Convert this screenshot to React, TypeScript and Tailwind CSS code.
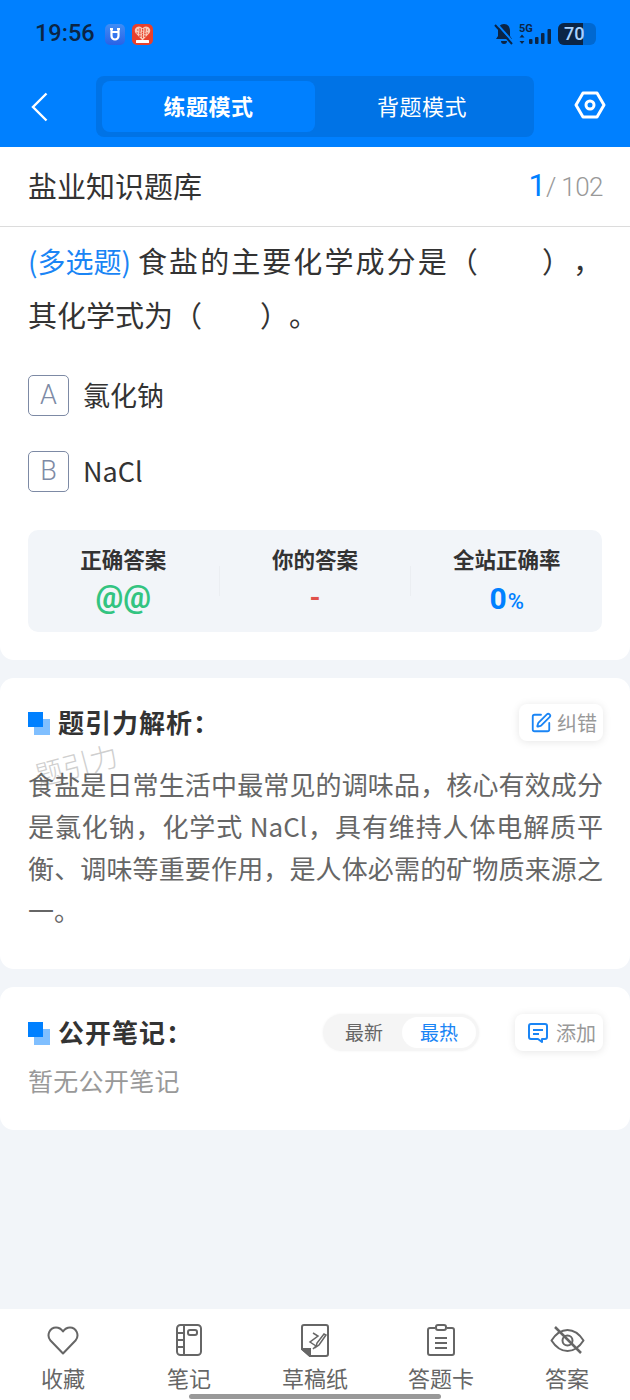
import { SquarePen } from "lucide-react"

const font = { fontFamily: '"Noto Sans CJK SC", "Noto Sans", sans-serif' }

function SectionMark() {
  return (
    <span className="relative block w-[22px] h-[23px] shrink-0">
      <span className="absolute left-[6px] top-[7px] w-4 h-4 bg-[#80bfff]" />
      <span className="absolute left-0 top-0 w-[15px] h-[15px] bg-[#0080ff]" />
    </span>
  )
}

function Option({ letter, text }: { letter: string; text: string }) {
  return (
    <div className="flex items-center gap-[14px] h-[42px]">
      <span className="w-[41px] h-[41px] rounded-[5px] border border-[#7d8aa5] flex items-center justify-center text-[27px] font-light text-[#7d8aa5] font-['Roboto']">
        {letter}
      </span>
      <span className="text-[27px] text-[#333]">{text}</span>
    </div>
  )
}

function Stat({ label, children }: { label: string; children: React.ReactNode }) {
  return (
    <div className="flex-1 flex flex-col items-center">
      <span className="text-[21.5px] leading-[30px] font-bold text-[#333]">{label}</span>
      <div className="h-[48px] flex items-center">{children}</div>
    </div>
  )
}

function TabItem({ label, children }: { label: string; children: React.ReactNode }) {
  return (
    <div className="flex-1 flex flex-col items-center">
      <div className="h-[44px] flex items-center justify-center">{children}</div>
      <span className="text-[22px] leading-[30px] text-[#666]">{label}</span>
    </div>
  )
}

export default function App() {
  return (
    <div style={font} className="w-[630px] h-[1400px] relative overflow-hidden bg-[#f2f5f9] flex flex-col">
      {/* Header */}
      <header className="h-[147px] bg-[#0080ff] shrink-0 flex flex-col">
        <div className="h-[76px] pl-[35px] pr-[34px] pt-[20px] flex items-start justify-between">
          <div className="flex items-center h-[28px]">
            <span className="text-[23.5px] font-medium text-[#0b2545] font-['Roboto']">19:56</span>
            <svg className="ml-[10px]" width="20" height="21" viewBox="0 0 20 21">
              <defs>
                <linearGradient id="appU" x1="0" y1="0" x2="0" y2="1">
                  <stop offset="0" stopColor="#3f8df5" />
                  <stop offset="1" stopColor="#2a62e6" />
                </linearGradient>
              </defs>
              <rect width="20" height="21" rx="5" fill="url(#appU)" />
              <path d="M5 5h3M12 5h3M6.500 5v7a3.500 3.500 0 0 0 7 0V5M6.500 8h7" fill="none" stroke="white" strokeWidth="2.200" />
            </svg>
            <svg className="ml-[7px]" width="21" height="21" viewBox="0 0 21 21">
              <rect width="21" height="21" rx="5" fill="#e8402c" />
              <path d="M10.500 16.500 3.500 9C1.500 5.500 4 2.500 7 2.500c1.500 0 2.700.7 3.500 2 .8-1.300 2-2 3.500-2 3 0 5.500 3 3.500 6.500Z" fill="#f8c9b8" />
              <path d="M5 6h11M4.500 9h12M7 12h7M8 4v9M10.500 5v10M13 4v9" stroke="#e8402c" strokeWidth="1" strokeDasharray="1.500 1" />
              <rect x="4" y="16" width="13" height="3" rx="0.500" fill="#fff" />
            </svg>
          </div>
          <div className="flex items-center h-[28px]">
            <svg width="20" height="22" viewBox="0 0 20 22" fill="#0b2545">
              <path d="M10 1C6 1 4 4 4 8v5l-2 3h16l-2-3V8c0-4-2-7-6-7ZM7 18h6a3 3 0 0 1-6 0Z" />
              <path d="M3 1 19 19" stroke="#0080ff" strokeWidth="2" />
              <path d="M1 2 18 21" stroke="#0b2545" strokeWidth="2" />
            </svg>
            <svg className="ml-[5px]" width="33" height="23" viewBox="0 0 33 23" fill="#0b2545">
              <text x="0" y="9" fontSize="11" fontWeight="700" fontFamily="Roboto">5G</text>
              <path d="M3 11.500l2.500 3H.5ZM3 21l2.500-3H.5Z" />
              <rect x="10" y="16" width="3.500" height="5" rx="1" />
              <rect x="16" y="14" width="3.500" height="7" rx="1" />
              <rect x="22" y="10" width="3.500" height="11" rx="1" />
              <rect x="28.500" y="6" width="3.500" height="15" rx="1" />
            </svg>
            <div className="ml-[6px] w-[38px] h-[22px] rounded-[6px] bg-[#0068d0] relative overflow-hidden">
              <div className="absolute left-0 top-0 h-full w-[25px] bg-[#0b2545]" />
              <span className="absolute left-[6px] top-0 text-[18px] leading-[22px] font-medium text-[#a9d3ff] font-['Roboto']">70</span>
            </div>
          </div>
        </div>
        <div className="flex items-start">
          <div className="w-[96px] pt-[16px] pl-[31px]">
            <svg width="17" height="30" viewBox="0 0 17 30" fill="none" stroke="white" strokeWidth="2.400">
              <path d="M15.500 1.500 2 15l13.500 13.500" />
            </svg>
          </div>
          <div className="w-[438px] h-[61px] rounded-[8px] bg-[#0073e6] py-[5px] pl-[6px] pr-[5px] flex">
            <div className="w-[213px] rounded-[8px] bg-[#0080ff] pb-[2px] flex items-center justify-center text-[22px] tracking-[0.5px] font-bold text-white">
              练题模式
            </div>
            <div className="flex-1 pb-[2px] flex items-center justify-center text-[22px] tracking-[0.5px] text-white">背题模式</div>
          </div>
          <div className="flex-1 flex justify-center pt-[13px] pl-[16px]">
            <svg width="32" height="32" viewBox="0 0 32 32" fill="none" stroke="white" strokeWidth="3">
              <path d="M9 4h14l7 12-7 12H9L2 16Z" strokeLinejoin="round" />
              <circle cx="16" cy="16" r="4" />
            </svg>
          </div>
        </div>
      </header>

      {/* Title row */}
      <div className="h-[80px] bg-white border-b border-[#dcdcdc] shrink-0 px-[27px] flex items-center justify-between">
        <span className="pl-[1px] pb-[2px] text-[29px] text-[#333]">盐业知识题库</span>
        <span className="flex items-baseline font-['Roboto'] font-light text-[#999]">
          <span className="text-[31px] font-normal text-[#0080ff]">1</span>
          <span className="text-[26px]">/</span>
          <span className="text-[26px] ml-[5px] tracking-[-0.5px]">102</span>
        </span>
      </div>

      {/* Question card */}
      <section className="h-[433px] bg-white rounded-b-[14px] px-[28px] shrink-0">
        <div className="text-[29px] leading-[53px] text-[#333] pt-[7px] [text-spacing-trim:space-all]">
          <p className="[text-align-last:justify]">
            <span className="inline-block mr-[5px] text-[28px] text-[#1a85f5]">(多选题)</span>食盐的主要化学成分是（　　），
          </p>
          <p>其化学式为（　　）。</p>
        </div>
        <div className="mt-[33px] flex flex-col gap-[34px]">
          <Option letter="A" text="氯化钠" />
          <Option letter="B" text="NaCl" />
        </div>
        <div className="mt-[38px] h-[102px] rounded-[10px] bg-[#f2f5f9] flex pt-[14px]">
          <Stat label="正确答案">
            <span className="text-[31px] font-bold text-[#33c481] font-['Roboto']">@@</span>
          </Stat>
          <div className="w-px h-[30px] mt-[22px] bg-[#ebeef2]" />
          <Stat label="你的答案">
            <span className="text-[28px] font-bold text-[#e0504a] font-['Roboto']">-</span>
          </Stat>
          <div className="w-px h-[30px] mt-[22px] bg-[#ebeef2]" />
          <Stat label="全站正确率">
            <span className="font-bold text-[#0080ff] font-['Roboto']">
              <span className="text-[30px]">0</span>
              <span className="text-[22px] font-medium ml-[1px]">%</span>
            </span>
          </Stat>
        </div>
      </section>

      {/* Analysis card */}
      <section className="mt-[18px] h-[291px] bg-white rounded-[14px] pl-[28px] pr-[27px] pt-[26px] shrink-0 relative">
        <div className="flex items-start justify-between">
          <div className="flex items-center gap-[8px] h-[38px]">
            <SectionMark />
            <h2 className="pb-[3px] text-[26px] font-bold text-[#333] tracking-[1px]">题引力解析：</h2>
          </div>
          <button className="h-[37px] w-[84px] rounded-[8px] bg-white shadow-[0_1px_8px_rgba(0,0,0,0.1)] flex items-center pl-[11px] gap-[5px] text-[20px] text-[#999]">
            <SquarePen className="w-[22px] h-[22px] text-[#1a85f5]" strokeWidth={2} />
            纠错
          </button>
        </div>
        <span className="absolute left-[34px] top-[65px] -rotate-[15deg] text-[28px] font-light text-[#cfcfcf]">题引力</span>
        <p className="relative mt-[21px] text-[26px] leading-[42px] text-[#666] text-justify">
          食盐是日常生活中最常见的调味品，核心有效成分是氯化钠，化学式 NaCl，具有维持人体电解质平衡、调味等重要作用，是人体必需的矿物质来源之一。
        </p>
      </section>

      {/* Notes card */}
      <section className="mt-[18px] h-[143px] bg-white rounded-[14px] pl-[28px] pr-[27px] pt-[27px] shrink-0">
        <div className="flex items-start justify-between">
          <div className="flex items-center gap-[8px] h-[38px]">
            <SectionMark />
            <h2 className="pb-[3px] text-[26px] font-bold text-[#333] tracking-[1px]">公开笔记：</h2>
          </div>
          <div className="flex items-start gap-[36px]">
            <div className="w-[156px] h-[37px] rounded-full bg-[#f5f5f5] p-[3px] flex items-center text-[19px] shadow-[0_0_3px_rgba(0,0,0,0.05)]">
              <span className="flex-1 text-center text-[#666]">最新</span>
              <span className="w-[74px] h-[31px] rounded-full bg-white flex items-center justify-center text-[#1a85f5]">最热</span>
            </div>
            <button className="h-[37px] w-[88px] rounded-[8px] bg-white shadow-[0_1px_8px_rgba(0,0,0,0.1)] flex items-center pl-[12px] gap-[7px] text-[20px] text-[#999]">
              <svg width="22" height="22" viewBox="0 0 22 22" fill="none" stroke="#1a85f5" strokeWidth="2">
                <path d="M4 2h14a2 2 0 0 1 2 2v11a2 2 0 0 1-2 2h-3v3l-4-3H4a2 2 0 0 1-2-2V4a2 2 0 0 1 2-2Z" strokeLinejoin="round" />
                <path d="M6 8h10M6 12h6" />
              </svg>
              添加
            </button>
          </div>
        </div>
        <p className="mt-[10px] text-[25px] leading-[36px] tracking-[0.3px] text-[#999]">暂无公开笔记</p>
      </section>

      {/* Bottom bar */}
      <nav className="absolute left-0 right-0 bottom-0 h-[91px] bg-white flex pt-[9px]">
        <TabItem label="收藏">
          <svg width="32" height="29" viewBox="0 0 32 29" fill="none" stroke="#666" strokeWidth="2">
            <path d="M16 27.500 3.500 14.500C-1 9 3 1.500 9 1.500c3 0 5.300 1.500 7 4 1.700-2.500 4-4 7-4 6 0 10 7.500 5.500 13Z" strokeLinejoin="round" />
          </svg>
        </TabItem>
        <TabItem label="笔记">
          <svg width="26" height="32" viewBox="0 0 26 32" fill="none" stroke="#666" strokeWidth="2">
            <rect x="1" y="1" width="24" height="30" rx="3.500" />
            <path d="M8 1v30M1 9h7M1 16h7M1 23h7" />
            <rect x="12" y="6" width="9" height="5" rx="2" />
          </svg>
        </TabItem>
        <TabItem label="草稿纸">
          <svg width="28" height="33" viewBox="0 0 28 33" fill="none" stroke="#666" strokeWidth="2">
            <path d="M3 1h22a2 2 0 0 1 2 2v27a2 2 0 0 1-2 2H9l-8-7V3a2 2 0 0 1 2-2Z" strokeLinejoin="round" />
            <path d="M1 25h8v7Z" fill="#666" />
            <path d="M12 9l5 3-8 6 6 4-3 3" strokeWidth="1.500" />
            <path d="M25 11l-7 10-3 2 1-4 7-9Z" strokeWidth="1.500" />
          </svg>
        </TabItem>
        <TabItem label="答题卡">
          <svg width="28" height="32" viewBox="0 0 28 32" fill="none" stroke="#666" strokeWidth="2">
            <path d="M8 4H3a2 2 0 0 0-2 2v23a2 2 0 0 0 2 2h22a2 2 0 0 0 2-2V6a2 2 0 0 0-2-2h-5" />
            <rect x="9" y="1" width="10" height="5" rx="2" />
            <path d="M8 14h12M8 19h12M8 24h12" />
          </svg>
        </TabItem>
        <TabItem label="答案">
          <svg width="35" height="28" viewBox="0 0 35 28" fill="none" stroke="#666" strokeWidth="2">
            <path d="M1.500 14.500C6 7.500 11 4 17.500 4s11.500 3.500 16 10.500C29 21.500 24 25 17.500 25S6 21.500 1.500 14.500Z" strokeLinejoin="round" />
            <circle cx="17.500" cy="14.500" r="5" />
            <path d="M5 1l26 26" strokeWidth="2.500" />
          </svg>
        </TabItem>
      </nav>
      <div className="absolute left-[189px] bottom-[1px] w-[252px] h-[5px] rounded-full bg-[#999]" />
    </div>
  )
}
